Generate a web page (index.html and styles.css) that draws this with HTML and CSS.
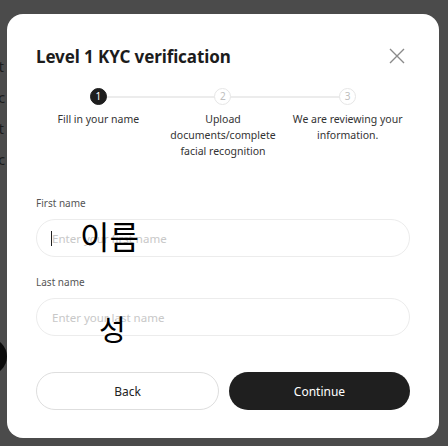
FILE: index.html
```html
<!DOCTYPE html>
<html lang="en">

<head>
    <meta charset="UTF-8">
    <meta name="viewport" content="width=device-width, initial-scale=1.0">
    <title>KYC verification</title>
    <link rel="stylesheet" href="styles.css">
</head>

<body>
    <div class="backdrop">
        <div class="page-edge">
            <div class="edge-tab"></div>
            <div class="edge-line edge-first">Spot</div>
            <div class="edge-line">Spec</div>
            <div class="edge-line">Spot</div>
            <div class="edge-line">Spec</div>
            <div class="edge-dot"></div>
        </div>

        <div class="modal">
            <div class="modal-header">
                <h1>Level 1 KYC verification</h1>
                <button class="close" aria-label="Close">
                    <svg width="16" height="16" viewBox="0 0 16 16">
                        <path d="M1 1 L15 15 M15 1 L1 15" stroke="#8a8a8a" stroke-width="1.4" fill="none" />
                    </svg>
                </button>
            </div>

            <div class="steps">
                <div class="step active">
                    <div class="step-dot">1</div>
                    <div class="step-label">Fill in your name</div>
                </div>
                <div class="step">
                    <div class="step-dot">2</div>
                    <div class="step-label">Upload documents/complete facial recognition</div>
                </div>
                <div class="step last">
                    <div class="step-dot">3</div>
                    <div class="step-label">We are reviewing your information.</div>
                </div>
            </div>

            <div class="form">
                <label class="field-label" for="first">First name</label>
                <div class="field">
                    <span class="caret"></span>
                    <input type="text" id="first" placeholder="Enter your first name">
                    <span class="ime ime-first">이름</span>
                </div>

                <label class="field-label" for="last">Last name</label>
                <div class="field">
                    <input type="text" id="last" placeholder="Enter your last name">
                    <span class="ime ime-last">성</span>
                </div>
            </div>

            <div class="actions">
                <button class="btn btn-back">Back</button>
                <button class="btn btn-continue">Continue</button>
            </div>
        </div>
    </div>
</body>

</html>
```

FILE: styles.css
```css
body {
    margin: 0;
    background-color: #4b4b4b;
    font-family: "Noto Sans", "Noto Sans CJK KR", sans-serif;
    height: 446px;
    overflow: hidden;
}

.backdrop {
    display: flex;
    padding-top: 14px;
}

.page-edge {
    width: 7px;
    overflow: hidden;
    position: relative;
    flex-shrink: 0;
}

.edge-tab {
    position: absolute;
    top: -14px;
    left: 0;
    width: 37px;
    height: 14px;
    background: #525252;
}

.edge-line {
    font-size: 15px;
    color: #1c1c1c;
    margin-left: -28px;
    height: 31px;
    line-height: 31px;
}

.edge-first {
    margin-top: 37px;
}

.edge-dot {
    margin-top: 163px;
    margin-left: -30px;
    width: 37px;
    height: 37px;
    border-radius: 50%;
    background: #0b0b0b;
}

.modal {
    width: 374px;
    height: 366px;
    background: white;
    border-radius: 16px;
    padding: 30px 29px 28px 29px;
    display: flex;
    flex-direction: column;
}

.modal-header {
    display: flex;
    justify-content: space-between;
    align-items: center;
    height: 24px;
}

.modal-header h1 {
    margin: 0;
    font-size: 17px;
    font-weight: 700;
    color: #1c1c1c;
    letter-spacing: -0.1px;
}

.close {
    background: none;
    border: none;
    padding: 0;
    margin-right: 5px;
    width: 16px;
    height: 16px;
    cursor: pointer;
}

.close svg {
    display: block;
}

.steps {
    display: grid;
    grid-template-columns: repeat(3, 1fr);
    margin-top: 20px;
}

.step {
    position: relative;
    display: flex;
    flex-direction: column;
    align-items: center;
}

.step::after {
    content: "";
    position: absolute;
    top: 8px;
    left: 50%;
    width: 100%;
    height: 2px;
    background: #ececec;
}

.step.last::after {
    display: none;
}

.step-dot {
    position: relative;
    z-index: 1;
    width: 15px;
    height: 15px;
    border-radius: 50%;
    border: 1px solid #e6e6e6;
    background: white;
    color: #bdbdbd;
    font-size: 10px;
    line-height: 15px;
    text-align: center;
}

.step.active .step-dot {
    background: #1e1e1e;
    border-color: #1e1e1e;
    color: white;
}

.step-label {
    margin-top: 6px;
    font-size: 10.5px;
    line-height: 16px;
    color: #333;
    text-align: center;
    padding: 0 6px;
}

.form {
    display: flex;
    flex-direction: column;
    margin-top: 36px;
}

.field-label {
    font-size: 10px;
    color: #555;
    line-height: 16px;
    margin-bottom: 8px;
}

.field {
    position: relative;
    margin-bottom: 17px;
}

.field input {
    box-sizing: border-box;
    width: 100%;
    height: 38px;
    border: 1px solid #ececec;
    border-radius: 19px;
    padding: 0 15px;
    font-family: inherit;
    font-size: 11.5px;
    outline: none;
}

.field input::placeholder {
    color: #c8c8c8;
}

.caret {
    position: absolute;
    left: 15px;
    top: 12px;
    width: 1px;
    height: 15px;
    background: #222;
}

.ime {
    position: absolute;
    font-family: "Noto Sans CJK KR", sans-serif;
    color: #000;
    line-height: 1;
    pointer-events: none;
}

.ime-first {
    left: 44px;
    top: 0px;
    font-size: 32px;
}

.ime-last {
    left: 63px;
    top: 16px;
    font-size: 29px;
}

.actions {
    display: flex;
    gap: 10px;
    margin-top: auto;
}

.btn {
    flex: 1;
    height: 38px;
    border-radius: 19px;
    font-family: inherit;
    font-size: 12px;
    cursor: pointer;
}

.btn-back {
    background: white;
    border: 1px solid #dedede;
    color: #222;
}

.btn-continue {
    background: #1f1f1f;
    border: none;
    color: white;
}
```
